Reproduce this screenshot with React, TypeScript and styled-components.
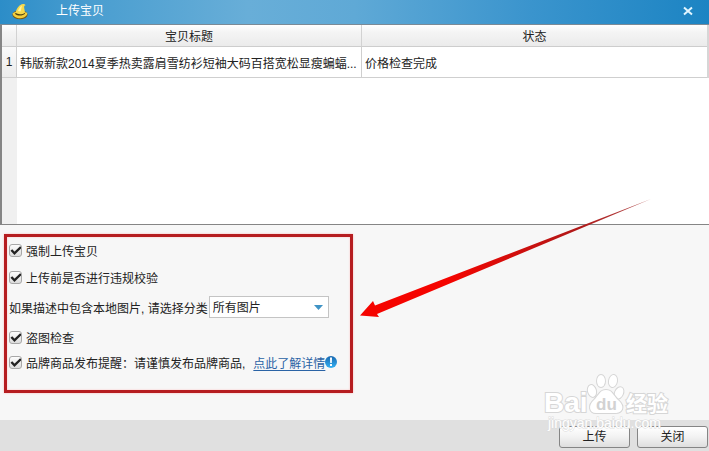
import React from "react";
import styled, { createGlobalStyle } from "styled-components";

const Global = createGlobalStyle`
  * { box-sizing: border-box; }
  body { margin: 0; }
  body, button, select {
    font-family: "Liberation Sans", "Noto Sans CJK SC", sans-serif;
    font-size: 12px;
    color: #222;
  }
`;

const Dialog = styled.div`
  position: relative;
  display: flex;
  flex-direction: column;
  min-height: 100vh;
  overflow: hidden;
  background: #f7f7f7;
`;

const TitleBar = styled.header`
  display: flex;
  align-items: center;
  height: 25px;
  padding: 0 14px 2px 12px;
  border-bottom: 1px solid #7b8a96;
  background: linear-gradient(90deg, #2c8dc8 0%, #4a9ed0 13%, #68aed8 35%, #5fa9d6 50%, #3a94cd 75%, #1c84c3 100%);
`;

const Title = styled.h1`
  flex: 1;
  margin: 0 0 0 27px;
  font-size: 12px;
  font-weight: 400;
  line-height: 20px;
  color: #fff;
`;

const CloseButton = styled.button`
  display: flex;
  padding: 0;
  border: 0;
  background: none;
`;

const TableArea = styled.div`
  flex: 1;
  display: flex;
  flex-direction: column;
  border-left: 2px solid #858585;
  border-bottom: 1px solid #858585;
  background: linear-gradient(90deg, #f0f0f0 15px, #fff 15px);
`;

const Table = styled.table`
  width: 100%;
  table-layout: fixed;
  border-collapse: separate;
  border-spacing: 0;
  border-right: 2px solid #d6d6d6;
`;

const IndexCol = styled.col`
  width: 15px;
`;

const HeadCell = styled.th`
  height: 22px;
  padding: 2px 0 0;
  border-right: 1px solid #d2d2d2;
  border-bottom: 1px solid #cdcdcd;
  background: linear-gradient(#fff, #f4f4f4 35%, #ebebeb);
  font-weight: 400;
  line-height: 18px;
  &:last-child { border-right: 0; }
`;

const RowHead = styled.th`
  height: 31px;
  padding: 0;
  border-right: 1px solid #cfcfcf;
  border-bottom: 1px solid #cfcfcf;
  background: linear-gradient(#fafafa, #ececec);
  font-weight: 400;
`;

const Cell = styled.td`
  height: 31px;
  padding: 0 3px;
  border-right: 1px solid #cfcfcf;
  border-bottom: 1px solid #cfcfcf;
  background: #fff;
  white-space: nowrap;
  &:last-child { border-right: 0; }
`;

const OptionsArea = styled.main`
  position: relative;
  padding: 9px 4px 27px;
`;

const Options = styled.section`
  width: 349px;
  height: 159px;
  padding: 3px 2px;
  border: 3px solid #b61d20;
  box-shadow: 0 0 2px #ffb9b9, inset 0 0 2px #ffb9b9;
`;

const Line = styled.div<{ $height: number }>`
  display: flex;
  align-items: center;
  height: ${(p) => p.$height}px;
  white-space: nowrap;
`;

const CheckLabel = styled.label`
  display: flex;
  align-items: center;
  gap: 4px;
`;

const Check = styled.input`
  appearance: none;
  width: 13px;
  height: 13px;
  margin: 0;
  border: 1px solid #a8a8a8;
  border-radius: 3px;
  background: linear-gradient(#fdfdfd, #dcdcdc);
  &:checked {
    background:
      url("data:image/svg+xml,%3Csvg xmlns='http://www.w3.org/2000/svg' viewBox='0 0 12 12'%3E%3Cpath d='M1.8 5.3L4.8 8.5L11 2.4' fill='none' stroke='%23222' stroke-width='2.3'/%3E%3C/svg%3E") center / 12px 12px no-repeat,
      linear-gradient(#fdfdfd, #dcdcdc);
  }
`;

const SelectBox = styled.span`
  display: grid;
  align-items: center;
  width: 120px;
  margin-left: 1px;
  > * { grid-area: 1 / 1; }
  > svg { justify-self: end; margin-right: 6px; pointer-events: none; }
`;

const Select = styled.select`
  appearance: none;
  width: 100%;
  height: 22px;
  padding: 1px 20px 0 3px;
  border: 1px solid #c4c4c4;
  border-radius: 0;
  background: #fff;
`;

const Link = styled.a`
  margin-left: 8px;
  color: #2a63a5;
  text-underline-offset: 2px;
`;

const Footer = styled.footer`
  display: flex;
  justify-content: flex-end;
  gap: 7px;
  height: 31px;
  padding: 6px 1px 3px;
  background: #e0e0e0;
`;

const Button = styled.button`
  width: 71px;
  height: 22px;
  padding: 0;
  border: 1px solid #858585;
  border-radius: 3px;
  background: linear-gradient(#fff, #f2f2f2 50%, #dedede);
  line-height: 20px;
`;

const Arrow = styled.svg`
  position: absolute;
  left: 360px;
  bottom: 102px;
  pointer-events: none;
`;

const Watermark = styled.svg`
  position: absolute;
  right: 39px;
  bottom: 14px;
  pointer-events: none;
`;

function HatIcon() {
  return (
    <svg width="17" height="17" viewBox="0 0 17 15" preserveAspectRatio="none" aria-hidden="true">
      <ellipse cx="8" cy="10.4" rx="7.6" ry="4" fill="#7a5a12" />
      <path d="M.6 9C.8 12 5 13.6 8.5 13.4S15.6 11.5 15.2 8.6L12 8 3 8Z" fill="#f3ce3c" />
      <path d="M3 9.3C4 7.6 5 3.6 8.4 1.8 10 .5 12.8.6 13.6 2 12.4 2.2 11.9 2.8 12.2 4.5L13.2 9.2C10.6 11.6 5.8 11.6 3 9.3Z" fill="#f6d94c" />
      <path d="M3.4 8.7C6 10.4 10.5 10.4 12.9 8.5L13 9.5C10.8 11.5 5.8 11.6 3.2 9.7Z" fill="#51400f" />
      <path d="M6 7C7 4.6 8 3 10 2.1L8.6 7.5Z" fill="#fff3a0" />
    </svg>
  );
}

function InfoIcon() {
  return (
    <svg width="12" height="12" viewBox="0 0 12 12" aria-hidden="true">
      <defs>
        <linearGradient id="info" x2="0" y2="1">
          <stop stopColor="#1767b0" />
          <stop offset="1" stopColor="#35b2f3" />
        </linearGradient>
      </defs>
      <circle cx="6" cy="6" r="6" fill="url(#info)" />
      <path d="M5 1.5H7L6.8 7H5.2ZM5 8H7V10H5Z" fill="#fff" />
    </svg>
  );
}

function Option({ label, children }: { label: string; children?: React.ReactNode }) {
  return (
    <>
      <CheckLabel>
        <Check type="checkbox" defaultChecked />
        {label}
      </CheckLabel>
      {children}
    </>
  );
}

export default function App() {
  return (
    <Dialog>
      <Global />
      <TitleBar>
        <HatIcon />
        <Title>上传宝贝</Title>
        <CloseButton aria-label="关闭窗口">
          <svg width="14" height="12" viewBox="0 0 14 12">
            <path d="M3 2.5L11 9.5M11 2.5L3 9.5" stroke="#e2f6ff" strokeWidth="2" />
          </svg>
        </CloseButton>
      </TitleBar>

      <TableArea>
        <Table>
          <colgroup>
            <IndexCol />
            <col />
            <col />
          </colgroup>
          <thead>
            <tr>
              <HeadCell />
              <HeadCell scope="col">宝贝标题</HeadCell>
              <HeadCell scope="col">状态</HeadCell>
            </tr>
          </thead>
          <tbody>
            <tr>
              <RowHead scope="row">1</RowHead>
              <Cell>韩版新款2014夏季热卖露肩雪纺衫短袖大码百搭宽松显瘦蝙蝠...</Cell>
              <Cell>价格检查完成</Cell>
            </tr>
          </tbody>
        </Table>
      </TableArea>

      <OptionsArea>
        <Options>
          <Line $height={20}><Option label="强制上传宝贝" /></Line>
          <Line $height={34}><Option label="上传前是否进行违规校验" /></Line>
          <Line $height={26}>
            <label htmlFor="category">如果描述中包含本地图片, 请选择分类</label>
            <SelectBox>
              <Select id="category">
                <option>所有图片</option>
              </Select>
              <svg width="9" height="5" viewBox="0 0 9 5">
                <path d="M0 0H9L4.5 5Z" fill="#3f93c5" />
              </svg>
            </SelectBox>
          </Line>
          <Line $height={34}><Option label="盗图检查" /></Line>
          <Line $height={16}>
            <Option label="品牌商品发布提醒：请谨慎发布品牌商品,">
              <Link href="#details">点此了解详情</Link>
              <InfoIcon />
            </Option>
          </Line>
        </Options>
        <Arrow width="292" height="120" viewBox="0 0 292 120" aria-hidden="true">
          <defs>
            <linearGradient id="arrow">
              <stop offset=".3" stopColor="#f50400" />
              <stop offset=".75" stopColor="#b01818" />
              <stop offset="1" stopColor="#b05050" />
            </linearGradient>
          </defs>
          <path d="M0 117.5L13 103L15 107.5L291 1L17 116L19 119Z" fill="url(#arrow)" />
        </Arrow>
      </OptionsArea>

      <Footer>
        <Button>上传</Button>
        <Button>关闭</Button>
      </Footer>

      <Watermark width="126" height="66" viewBox="0 0 126 66" aria-hidden="true">
        <g fill="#fff" stroke="#d6d6d6" strokeWidth="2" paintOrder="stroke" fontFamily="'Liberation Sans', 'Noto Sans CJK SC', sans-serif" fontWeight="700">
          <text x="0" y="41" fontSize="28">Bai</text>
          <text x="82" y="40" fontSize="21">经验</text>
          <ellipse cx="48" cy="20" rx="4" ry="6" transform="rotate(-15 48 20)" />
          <ellipse cx="57" cy="10" rx="4" ry="6" />
          <ellipse cx="69" cy="10" rx="4" ry="6" transform="rotate(10 69 10)" />
          <ellipse cx="75" cy="22" rx="4" ry="6" transform="rotate(25 75 22)" />
          <path d="M62 19C68 19 69 24 74 29C82 36 78 42 71 42H52C45 42 44 34 50 29C55 24 56 19 62 19Z" />
          <text x="52" y="39" fontSize="17" fill="#d2d2d2" stroke="none">du</text>
        </g>
        <text x="4" y="57" fontSize="14" fontFamily="'Liberation Sans', sans-serif" fill="#fff" stroke="#dcdcdc" strokeWidth="1" paintOrder="stroke">jingyan.baidu.com</text>
      </Watermark>
    </Dialog>
  );
}
